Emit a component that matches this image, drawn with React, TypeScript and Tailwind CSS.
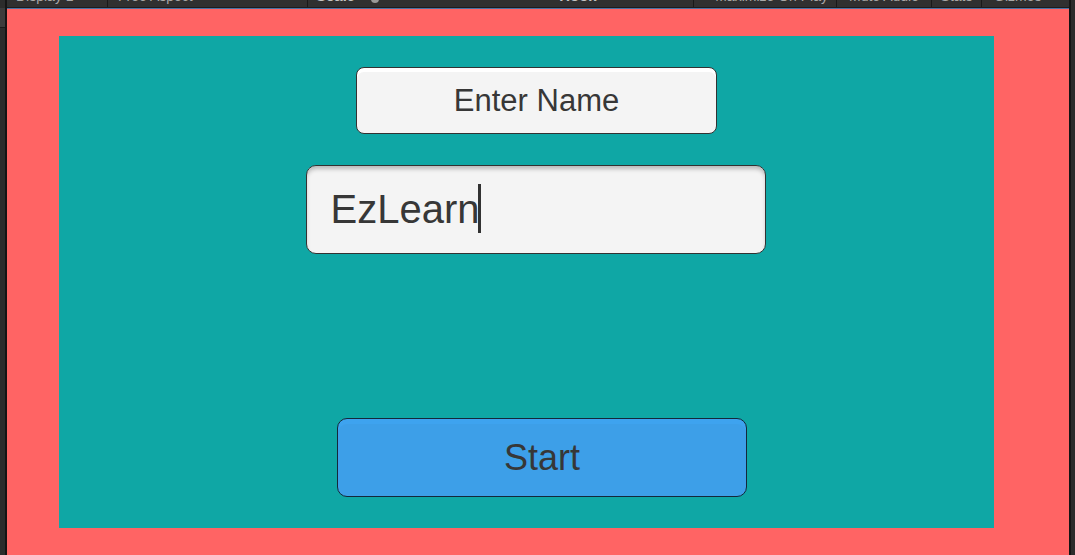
const barItem =
  "flex shrink-0 items-end overflow-hidden whitespace-nowrap border-r border-[#191919] pb-1 leading-[14px]";

function Toolbar() {
  return (
    <div className="flex h-2 shrink-0 items-stretch overflow-hidden border-b border-[#1d1d1d] bg-[#303030] text-[14px] text-[#a8a8a8]">
      <div className={`${barItem} w-[101px] pl-[9px]`}>Display 1</div>
      <div className={`${barItem} w-[200px] pl-[10px]`}>Free Aspect</div>
      <div className={`${barItem} grow pl-2 text-[15px] font-bold text-[#c4c4c4]`}>
        <span>Scale</span>
        <span className="ml-4 size-2 shrink-0 rounded-full bg-[#999999]" />
        <span className="ml-[180px]">Hook</span>
      </div>
      <div className={`${barItem} w-[143px] justify-end pr-2`}>Maximize On Play</div>
      <div className={`${barItem} w-[95px] justify-center`}>Mute Audio</div>
      <div className={`${barItem} w-[50px] justify-center`}>Stats</div>
      <div className={`${barItem} w-[87px] border-r-0 pl-3`}>Gizmos</div>
    </div>
  );
}

export default function App() {
  return (
    <div className="flex min-h-screen bg-[#2c2c2c] font-['Liberation_Sans',Arial,sans-serif] text-[#373737]">
      <div className="w-[5px] shrink-0">
        <div className="mt-2 h-5 border-b border-[#191919] bg-[#3c3c3c]" />
      </div>
      <div className="mr-1 flex min-w-0 grow flex-col border-x-2 border-[#151515]">
        <Toolbar />
        <main className="flex grow border-t border-[#4a72a4] bg-[#ff6464] pt-[27px] pr-[75px] pb-[27px] pl-[52px]">
          <form
            className="flex grow flex-col items-center bg-[#0fa7a5] py-[31px]"
            onSubmit={(e) => e.preventDefault()}
          >
            <label
              htmlFor="player-name"
              className="mr-[-20px] flex h-[67px] w-[361px] items-center justify-center rounded-lg border border-[#323232] bg-[#f4f4f4] pt-[2px] text-[31px] shadow-[inset_0_4px_0_#ffffff]"
            >
              Enter Name
            </label>
            <div className="relative mt-[31px] mr-[-18px] h-[89px] w-[460px]">
              <input
                id="player-name"
                type="text"
                defaultValue="EzLearn"
                className="h-full w-full rounded-[10px] border border-[#323232] bg-[#f4f4f4] pl-6 text-[40px] shadow-[inset_0_4px_4px_-1px_#b8b8b8] outline-none"
              />
              <span className="absolute top-[19px] left-[172px] h-[49px] w-[3px] bg-[#323232]" />
            </div>
            <button
              type="submit"
              className="mt-auto mr-[-31px] h-[79px] w-[410px] rounded-[10px] border border-[#14283a] bg-[#3d9fe8] text-[36px] shadow-[inset_0_5px_0_#3ea3ef]"
            >
              Start
            </button>
          </form>
        </main>
      </div>
    </div>
  );
}
